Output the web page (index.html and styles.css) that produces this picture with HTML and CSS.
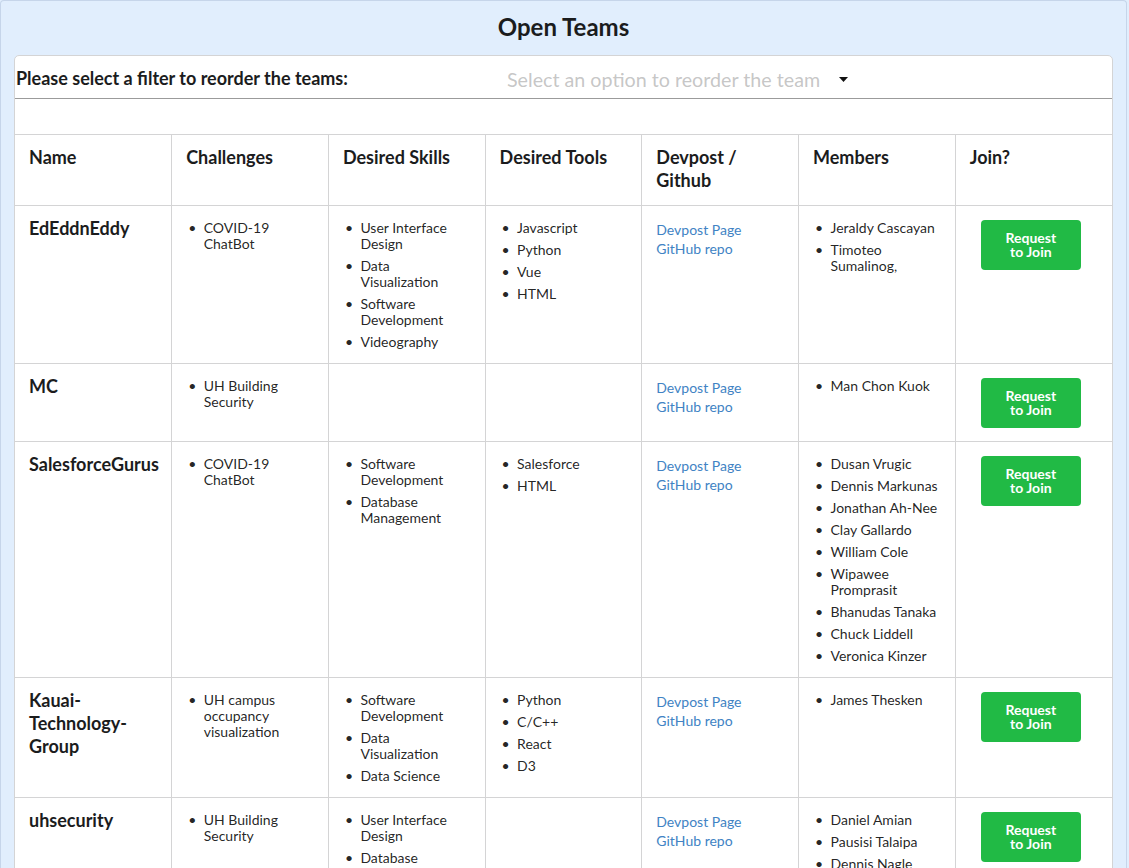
FILE: index.html
```html
<!DOCTYPE html>
<html lang="en">
<head>
<meta charset="utf-8">
<title>Open Teams</title>
<link rel="stylesheet" href="styles.css">
</head>
<body>
<div class="page">
  <h2 class="title">Open Teams</h2>
  <div class="card">
    <div class="filter">
      <div class="filter-label">Please select a filter to reorder the teams:</div>
      <div class="dropdown">
        <span class="placeholder">Select an option to reorder the team</span>
        <svg class="caret" width="9" height="5" viewBox="0 0 9 5"><path d="M0 0 L9 0 L4.5 5 Z" fill="#111"/></svg>
      </div>
    </div>
    <div class="spacer"></div>
    <table class="teams">
      <thead>
        <tr>
          <th>Name</th>
          <th>Challenges</th>
          <th>Desired Skills</th>
          <th>Desired Tools</th>
          <th>Devpost / Github</th>
          <th>Members</th>
          <th>Join?</th>
        </tr>
      </thead>
      <tbody>
        <tr>
          <td class="name">EdEddnEddy</td>
          <td><ul class="list"><li>COVID-19 ChatBot</li></ul></td>
          <td><ul class="list"><li>User Interface Design</li><li>Data Visualization</li><li>Software Development</li><li>Videography</li></ul></td>
          <td><ul class="list"><li>Javascript</li><li>Python</li><li>Vue</li><li>HTML</li></ul></td>
          <td><div class="links"><a href="#">Devpost Page</a><br><a href="#">GitHub repo</a></div></td>
          <td><ul class="list"><li>Jeraldy Cascayan</li><li>Timoteo Sumalinog,</li></ul></td>
          <td class="join"><button class="btn">Request to Join</button></td>
        </tr>
        <tr>
          <td class="name">MC</td>
          <td><ul class="list"><li>UH Building Security</li></ul></td>
          <td></td>
          <td></td>
          <td><div class="links"><a href="#">Devpost Page</a><br><a href="#">GitHub repo</a></div></td>
          <td><ul class="list"><li>Man Chon Kuok</li></ul></td>
          <td class="join"><button class="btn">Request to Join</button></td>
        </tr>
        <tr>
          <td class="name">SalesforceGurus</td>
          <td><ul class="list"><li>COVID-19 ChatBot</li></ul></td>
          <td><ul class="list"><li>Software Development</li><li>Database Management</li></ul></td>
          <td><ul class="list"><li>Salesforce</li><li>HTML</li></ul></td>
          <td><div class="links"><a href="#">Devpost Page</a><br><a href="#">GitHub repo</a></div></td>
          <td><ul class="list"><li>Dusan Vrugic</li><li>Dennis Markunas</li><li>Jonathan Ah-Nee</li><li>Clay Gallardo</li><li>William Cole</li><li>Wipawee Promprasit</li><li>Bhanudas Tanaka</li><li>Chuck Liddell</li><li>Veronica Kinzer</li></ul></td>
          <td class="join"><button class="btn">Request to Join</button></td>
        </tr>
        <tr>
          <td class="name">Kauai-Technology-Group</td>
          <td><ul class="list"><li>UH campus occupancy visualization</li></ul></td>
          <td><ul class="list"><li>Software Development</li><li>Data Visualization</li><li>Data Science</li></ul></td>
          <td><ul class="list"><li>Python</li><li>C/C++</li><li>React</li><li>D3</li></ul></td>
          <td><div class="links"><a href="#">Devpost Page</a><br><a href="#">GitHub repo</a></div></td>
          <td><ul class="list"><li>James Thesken</li></ul></td>
          <td class="join"><button class="btn">Request to Join</button></td>
        </tr>
        <tr>
          <td class="name">uhsecurity</td>
          <td><ul class="list"><li>UH Building Security</li></ul></td>
          <td><ul class="list"><li>User Interface Design</li><li>Database Management</li><li>Software Development</li></ul></td>
          <td></td>
          <td><div class="links"><a href="#">Devpost Page</a><br><a href="#">GitHub repo</a></div></td>
          <td><ul class="list"><li>Daniel Amian</li><li>Pausisi Talaipa</li><li>Dennis Nagle</li><li>Kyle Tanaka</li></ul></td>
          <td class="join"><button class="btn">Request to Join</button></td>
        </tr>
      </tbody>
    </table>
  </div>
</div>
</body>
</html>
```

FILE: styles.css
```css
html, body {
  margin: 0;
  padding: 0;
  background: #e1eefd;
}

body {
  font-family: Lato, "Open Sans", "Liberation Sans", sans-serif;
  font-size: 14px;
  color: rgba(0, 0, 0, 0.87);
}

.page {
  width: 1127px;
  box-sizing: border-box;
  background: #e1eefd;
  border: 1px solid #c6d5ea;
  border-bottom: none;
  border-radius: 4px 4px 0 0;
  padding: 10px 13px 40px 13px;
}

.title {
  margin: 0 0 13px;
  text-align: center;
  font-size: 24px;
  font-weight: 700;
  line-height: 31px;
  color: #1b1c1d;
}

.card {
  background: #fff;
  border: 1px solid #d4d4d5;
  border-radius: 5px 5px 0 0;
}

.filter {
  display: grid;
  grid-template-columns: 492px 1fr;
  align-items: center;
  height: 43px;
  box-sizing: border-box;
  padding-top: 3px;
  border-bottom: 1px solid #9b9b9b;
}

.filter-label {
  padding-left: 1px;
  font-size: 18px;
  font-weight: 700;
  line-height: 23px;
  color: #1b1c1d;
}

.dropdown {
  display: flex;
  align-items: center;
  gap: 19px;
  margin-top: 1px;
}

.placeholder {
  font-size: 19.7px;
  line-height: 23px;
  color: rgba(191, 191, 191, 0.9);
}

.caret {
  display: block;
}

.spacer {
  height: 35px;
}

.teams {
  width: 100%;
  border-collapse: collapse;
  table-layout: fixed;
}

.teams th,
.teams td {
  text-align: left;
  vertical-align: top;
  border-top: 1px solid #d4d4d5;
  border-left: 1px solid #d4d4d5;
}

.teams th:first-child,
.teams td:first-child {
  border-left: none;
}

.teams th {
  padding: 11px 14px 13px;
  font-size: 18px;
  font-weight: 700;
  line-height: 23px;
  color: #1b1c1d;
}

.teams td {
  padding: 11px 17px 10px 14px;
}

.teams td.name {
  font-size: 18px;
  font-weight: 700;
  line-height: 23px;
  color: #1b1c1d;
}

.list {
  list-style: none;
  margin: 0;
  padding: 0 0 0 17.5px;
}

.list li {
  padding: 3px 0;
  line-height: 16px;
}

.list li::before {
  content: "\2022";
  display: inline-block;
  width: 17.5px;
  margin-left: -17.5px;
  text-indent: 2px;
}

.links {
  padding-top: 3px;
  line-height: 19px;
}

.links a {
  color: #4183c4;
  text-decoration: none;
}

.teams td.join {
  text-align: center;
}

.btn {
  display: inline-block;
  width: 100px;
  box-sizing: border-box;
  margin: 3px 3px 3px 0;
  padding: 11px 21px;
  border: none;
  border-radius: 4px;
  background: #21ba45;
  color: #fff;
  font-family: Lato, "Open Sans", "Liberation Sans", sans-serif;
  font-size: 14px;
  font-weight: 700;
  line-height: 14px;
  cursor: pointer;
}
```
